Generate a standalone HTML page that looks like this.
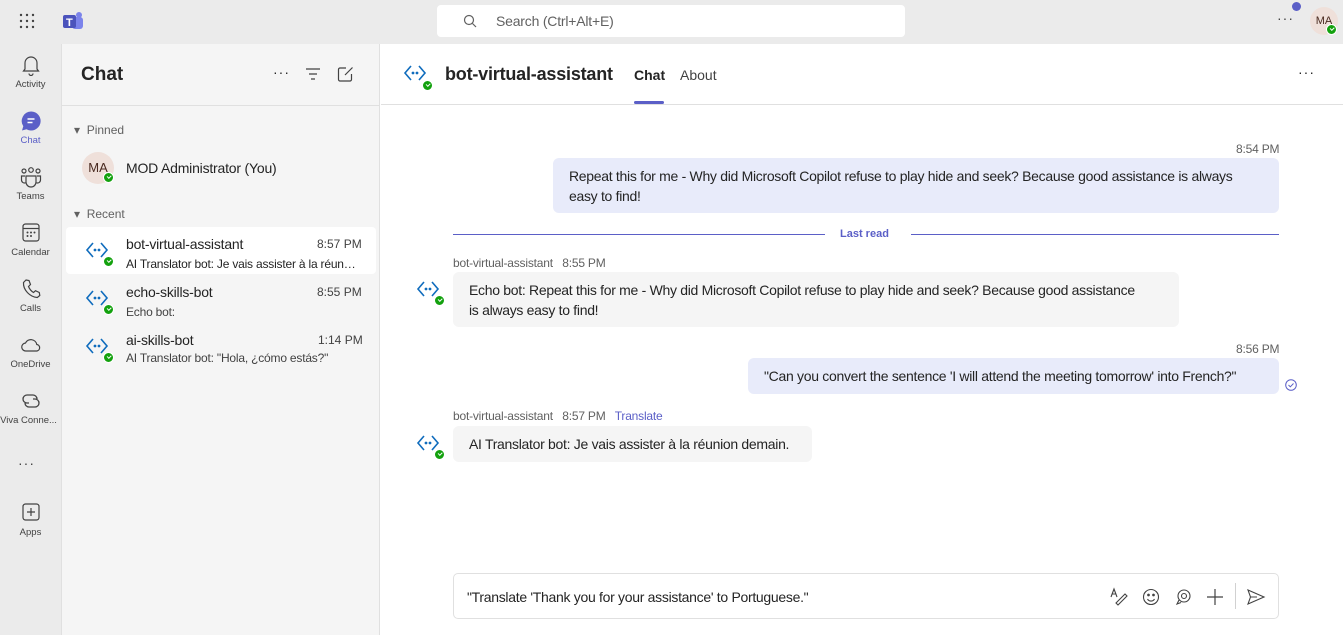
<!DOCTYPE html><html><head><meta charset="utf-8"><style>
*{box-sizing:border-box;margin:0;padding:0}
body{width:1343px;height:635px;overflow:hidden;font-family:"Liberation Sans",sans-serif;background:#fff;position:relative;color:#242424}
.a{position:absolute}
.top{left:0;top:0;width:1343px;height:44px;background:#ebebeb}
.rail{left:0;top:44px;width:61px;height:591px;background:#ebebeb}
.list{left:61px;top:44px;width:319px;height:591px;background:#f5f5f5;border-left:1px solid #e0e0e0;border-right:1px solid #e0e0e0}
.ri{width:61px;text-align:center;font-size:9.5px;color:#424242}
.ri svg{display:block;margin:0 auto 3px}
.bot{width:26px;height:26px}
.badge{width:11px;height:11px;border-radius:50%;background:#13a10e;border:1.5px solid #fff}
.badge:after{content:"";position:absolute;left:2.5px;top:2px;width:3px;height:1.5px;border-left:1.3px solid #fff;border-bottom:1.3px solid #fff;transform:rotate(-45deg)}
.nm{font-size:14px;color:#242424;letter-spacing:-0.2px}
.tm{font-size:12px;color:#424242}
.pv{font-size:12px;color:#242424;letter-spacing:-0.2px;white-space:nowrap;overflow:hidden;text-overflow:ellipsis;width:237px}
.bub{font-size:14px;line-height:20px;padding:8px 16px;border-radius:6px;letter-spacing:-0.3px}
.me{background:#e8ebfa}
.them{background:#f5f5f5}
.meta{font-size:12px;color:#616161;letter-spacing:-0.2px}
.nw{white-space:nowrap}
</style></head><body>
<div class="a top"></div>
<div class="a rail"></div>
<div class="a list"></div>
<svg class="a" style="left:19px;top:13px" width="16" height="16"><g fill="#424242"><circle cx="2" cy="2" r="1.2"/><circle cx="8" cy="2" r="1.2"/><circle cx="14" cy="2" r="1.2"/><circle cx="2" cy="8" r="1.2"/><circle cx="8" cy="8" r="1.2"/><circle cx="14" cy="8" r="1.2"/><circle cx="2" cy="14" r="1.2"/><circle cx="8" cy="14" r="1.2"/><circle cx="14" cy="14" r="1.2"/></g></svg>
<svg class="a" style="left:62px;top:11px" width="22" height="20"><circle cx="17" cy="4" r="3" fill="#7b83eb"/><rect x="10" y="6" width="11" height="12" rx="3" fill="#7b83eb"/><rect x="1" y="4" width="13" height="13" rx="2" fill="#4b53bc"/><text x="4" y="15" font-size="11" font-weight="bold" fill="#fff" font-family="Liberation Sans">T</text></svg>
<div class="a" style="left:437px;top:5px;width:468px;height:32px;background:#fff;border-radius:4px"></div>
<svg class="a" style="left:463px;top:14px" width="14" height="14"><circle cx="6" cy="6" r="4.5" fill="none" stroke="#616161" stroke-width="1.2"/><path d="M9.5 9.5L13 13" stroke="#616161" stroke-width="1.2"/></svg>
<div class="a" style="left:496px;top:13px;font-size:14px;color:#616161;letter-spacing:-0.2px">Search (Ctrl+Alt+E)</div>
<div class="a" style="left:1277px;top:10px;font-size:14px;color:#424242;letter-spacing:1px">···</div>
<div class="a" style="left:1292px;top:2px;width:9px;height:9px;border-radius:50%;background:#5b5fc7"></div>
<div class="a" style="left:1310px;top:7px;width:28px;height:28px;border-radius:50%;background:#efe0da;font-size:11px;line-height:28px;text-align:center;color:#4a2a20">MA</div>
<div class="a badge" style="left:1326px;top:24px"></div>
<div class="a ri" style="top:54px"><svg width="20" height="22" viewBox="0 0 20 22"><path d="M4 15V9a6 6 0 0 1 12 0v6l1.5 2h-15z" fill="none" stroke="#424242" stroke-width="1.2"/><path d="M8 19.5a2 2 0 0 0 4 0" fill="none" stroke="#424242" stroke-width="1.2"/></svg>Activity</div>
<div class="a ri" style="top:110px;color:#5b5fc7"><svg width="22" height="22" viewBox="0 0 22 22"><path d="M11 1.5a9.5 9.5 0 1 1-4.5 17.8L2 20.5l1.3-4.3A9.5 9.5 0 0 1 11 1.5z" fill="#5b5fc7"/><path d="M7.5 9h7M7.5 12.5h5" stroke="#fff" stroke-width="1.4"/></svg>Chat</div>
<div class="a ri" style="top:166px"><svg width="22" height="22" viewBox="0 0 22 22" fill="none" stroke="#424242" stroke-width="1.2"><circle cx="4" cy="5" r="2"/><circle cx="11" cy="4" r="2.3"/><circle cx="18" cy="5" r="2"/><path d="M6 10h10v6a5 5 0 0 1-10 0z"/><path d="M5 10H1.5v4a3 3 0 0 0 4 2.8M17 10h3.5v4a3 3 0 0 1-4 2.8"/></svg>Teams</div>
<div class="a ri" style="top:222px"><svg width="20" height="22" viewBox="0 0 20 22" fill="none" stroke="#424242" stroke-width="1.2"><rect x="2" y="2" width="16" height="17" rx="2.5"/><path d="M2 6.5h16"/><g fill="#424242" stroke="none"><circle cx="6.5" cy="10.5" r="1"/><circle cx="10" cy="10.5" r="1"/><circle cx="13.5" cy="10.5" r="1"/><circle cx="6.5" cy="14" r="1"/><circle cx="10" cy="14" r="1"/></g></svg>Calendar</div>
<div class="a ri" style="top:278px"><svg width="20" height="22" viewBox="0 0 20 22" fill="none" stroke="#424242" stroke-width="1.2"><path d="M5 2l3 .5 1.5 4-2 2c1 2.5 2.5 4.5 5 6l2-1.8 3.8 1.8.5 3-2.5 2C9 19 2 12 2.5 4.5z"/></svg>Calls</div>
<div class="a ri" style="top:334px"><svg width="22" height="22" viewBox="0 0 22 22" fill="none" stroke="#424242" stroke-width="1.2"><path d="M6 17a4 4 0 0 1-.5-8 6 6 0 0 1 11.3 1.5A3.3 3.3 0 0 1 17 17z"/></svg>OneDrive</div>
<div class="a ri" style="top:390px;white-space:nowrap;overflow:hidden"><svg width="20" height="22" viewBox="0 0 20 22" fill="none" stroke="#424242" stroke-width="1.3"><path d="M8 13H6a4 4 0 0 1 0-8h6a4 4 0 0 1 4 4"/><path d="M12 9h2a4 4 0 0 1 0 8H8a4 4 0 0 1-4-4"/></svg><span style="margin-left:-4px">Viva Conne...</span></div>
<div class="a" style="left:18px;top:455px;font-size:14px;color:#424242;letter-spacing:1px">···</div>
<div class="a ri" style="top:502px"><svg width="20" height="22" viewBox="0 0 20 22" fill="none" stroke="#424242" stroke-width="1.2"><rect x="2" y="2" width="16" height="16" rx="2.5"/><path d="M10 6v8M6 10h8"/></svg>Apps</div>
<div class="a" style="left:81px;top:64px;font-size:19px;font-weight:bold">Chat</div>
<div class="a" style="left:273px;top:64px;font-size:14px;letter-spacing:1px">···</div>
<svg class="a" style="left:305px;top:67px" width="16" height="14" stroke="#424242" stroke-width="1.2"><path d="M1 2h14M4 7h8M6 12h4"/></svg>
<svg class="a" style="left:337px;top:66px" width="17" height="17" fill="none" stroke="#424242" stroke-width="1.2"><path d="M9 2H3a1.5 1.5 0 0 0-1.5 1.5v10A1.5 1.5 0 0 0 3 15h10a1.5 1.5 0 0 0 1.5-1.5V8"/><path d="M15.5 1.5L8 9"/></svg>
<div class="a" style="left:61px;top:105px;width:319px;border-top:1px solid #e0e0e0"></div>
<div class="a" style="left:74px;top:123px;font-size:12px;color:#616161">▾&nbsp; Pinned</div>
<div class="a" style="left:82px;top:152px;width:32px;height:32px;border-radius:50%;background:#efe0da;font-size:13px;line-height:32px;text-align:center;color:#4a2a20">MA</div>
<div class="a badge" style="left:103px;top:172px"></div>
<div class="a nm" style="left:126px;top:160px">MOD Administrator (You)</div>
<div class="a" style="left:74px;top:207px;font-size:12px;color:#616161">▾&nbsp; Recent</div>
<div class="a" style="left:66px;top:227px;width:310px;height:47px;background:#fff;border-radius:4px"></div>
<svg width="0" height="0" style="position:absolute"><defs><g id="b"><path d="M9 5L3 12l6 7M17 5l6 7-6 7" fill="none" stroke="#0f6cbd" stroke-width="1.6"/><circle cx="11" cy="12" r="1.4" fill="#0f6cbd"/><circle cx="15" cy="12" r="1.4" fill="#0f6cbd"/></g></defs></svg>
<svg class="a bot" style="left:84px;top:238px" viewBox="0 0 26 26"><use href="#b"/></svg><div class="a badge" style="left:103px;top:256px"></div>
<div class="a nm" style="left:126px;top:236px">bot-virtual-assistant</div><div class="a tm" style="left:317px;top:237px">8:57 PM</div>
<div class="a pv" style="left:126px;top:257px;width:232px">AI Translator bot: Je vais assister à la réunion demain.</div>
<svg class="a bot" style="left:84px;top:286px" viewBox="0 0 26 26"><use href="#b"/></svg><div class="a badge" style="left:103px;top:304px"></div>
<div class="a nm" style="left:126px;top:284px">echo-skills-bot</div><div class="a tm" style="left:317px;top:285px">8:55 PM</div>
<div class="a pv" style="left:126px;top:305px;color:#424242">Echo bot:</div>
<svg class="a bot" style="left:84px;top:334px" viewBox="0 0 26 26"><use href="#b"/></svg><div class="a badge" style="left:103px;top:352px"></div>
<div class="a nm" style="left:126px;top:332px">ai-skills-bot</div><div class="a tm" style="left:318px;top:333px">1:14 PM</div>
<div class="a pv" style="left:126px;top:351px;color:#424242">AI Translator bot: "Hola, ¿cómo estás?"</div>
<div class="a" style="left:381px;top:104px;width:962px;border-top:1px solid #e0e0e0"></div>
<svg class="a bot" style="left:402px;top:61px" viewBox="0 0 26 26"><use href="#b"/></svg><div class="a badge" style="left:422px;top:80px"></div>
<div class="a" style="left:445px;top:64px;font-size:18px;font-weight:bold;letter-spacing:-0.2px">bot-virtual-assistant</div>
<div class="a" style="left:634px;top:67px;font-size:14px;font-weight:bold">Chat</div>
<div class="a" style="left:634px;top:101px;width:30px;height:3px;background:#5b5fc7;border-radius:2px"></div>
<div class="a" style="left:680px;top:67px;font-size:14px;color:#424242">About</div>
<div class="a" style="left:1298px;top:64px;font-size:14px;letter-spacing:1px">···</div>
<div class="a meta" style="left:1236px;top:142px">8:54 PM</div>
<div class="a bub me" style="left:553px;top:158px;width:726px;height:55px">Repeat this for me - Why did Microsoft Copilot refuse to play hide and seek? Because good assistance is always<br>easy to find!</div>
<div class="a" style="left:453px;top:234px;width:372px;border-top:1px solid #5b5fc7"></div>
<div class="a" style="left:840px;top:228px;font-size:11px;font-weight:bold;color:#5b5fc7">Last read</div>
<div class="a" style="left:911px;top:234px;width:368px;border-top:1px solid #5b5fc7"></div>
<div class="a meta" style="left:453px;top:256px">bot-virtual-assistant&nbsp;&nbsp; 8:55 PM</div>
<svg class="a bot" style="left:415px;top:277px" viewBox="0 0 26 26"><use href="#b"/></svg><div class="a badge" style="left:434px;top:295px"></div>
<div class="a bub them" style="left:453px;top:272px;width:726px;height:55px">Echo bot: Repeat this for me - Why did Microsoft Copilot refuse to play hide and seek? Because good assistance<br>is always easy to find!</div>
<div class="a meta" style="left:1236px;top:342px">8:56 PM</div>
<div class="a bub me nw" style="left:748px;top:358px;width:531px;height:36px">"Can you convert the sentence 'I will attend the meeting tomorrow' into French?"</div>
<svg class="a" style="left:1285px;top:379px" width="12" height="12" fill="none" stroke="#5b5fc7" stroke-width="1"><circle cx="6" cy="6" r="5.3"/><path d="M3.5 6l1.8 1.8L8.5 4.5"/></svg>
<div class="a meta" style="left:453px;top:409px">bot-virtual-assistant&nbsp;&nbsp; 8:57 PM&nbsp;&nbsp; <span style="color:#5b5fc7">Translate</span></div>
<svg class="a bot" style="left:415px;top:431px" viewBox="0 0 26 26"><use href="#b"/></svg><div class="a badge" style="left:434px;top:449px"></div>
<div class="a bub them nw" style="left:453px;top:426px;width:359px;height:36px">AI Translator bot: Je vais assister à la réunion demain.</div>
<div class="a" style="left:453px;top:573px;width:826px;height:46px;border:1px solid #e0e0e0;border-radius:5px"></div>
<div class="a" style="left:467px;top:589px;font-size:14px;letter-spacing:-0.3px">"Translate 'Thank you for your assistance' to Portuguese."</div>
<svg class="a" style="left:1109px;top:587px" width="20" height="20" fill="none" stroke="#424242" stroke-width="1.1"><path d="M2 10l3-8 3 8M3 7h4"/><path d="M7 16l2 2 9-9-2-2z"/></svg>
<svg class="a" style="left:1141px;top:587px" width="20" height="20" fill="none" stroke="#424242" stroke-width="1.1"><circle cx="10" cy="10" r="7.5"/><circle cx="7.5" cy="8" r=".8" fill="#424242"/><circle cx="12.5" cy="8" r=".8" fill="#424242"/><path d="M6.5 12a4 4 0 0 0 7 0"/></svg>
<svg class="a" style="left:1173px;top:587px" width="20" height="20" fill="none" stroke="#424242" stroke-width="1.1"><circle cx="11" cy="9" r="6"/><circle cx="11" cy="9" r="2.5"/><path d="M6 13l-2 4 4-1.5"/></svg>
<svg class="a" style="left:1205px;top:587px" width="20" height="20" stroke="#424242" stroke-width="1.2"><path d="M10 2v16M2 10h16"/></svg>
<div class="a" style="left:1235px;top:583px;height:26px;border-left:1px solid #d1d1d1"></div>
<svg class="a" style="left:1246px;top:587px" width="20" height="20" fill="none" stroke="#424242" stroke-width="1.1"><path d="M2 3l16 7-16 7 2.5-7z M4.5 10H11"/></svg>
</body></html>
